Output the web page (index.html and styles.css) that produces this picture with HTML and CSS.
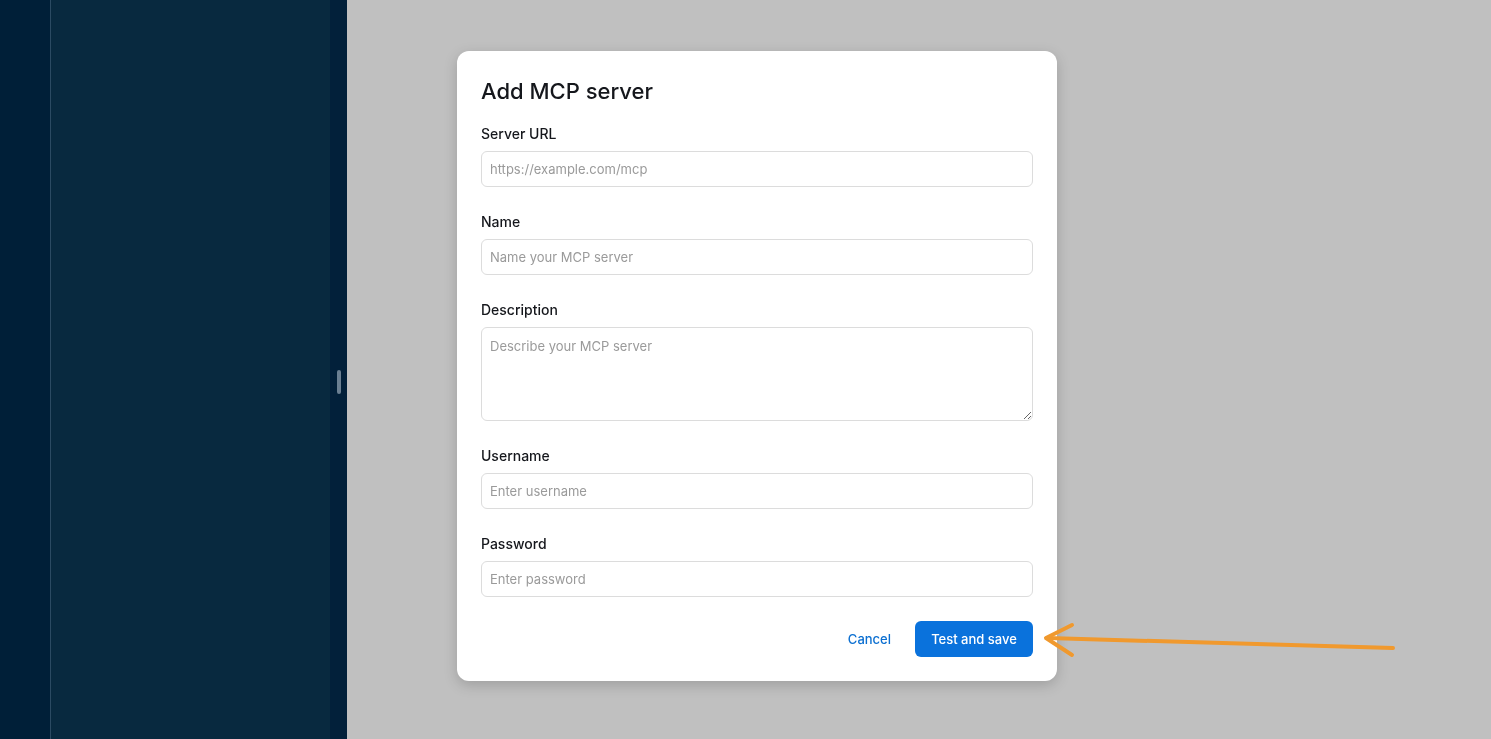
FILE: index.html
```html
<!DOCTYPE html>
<html lang="en">
<head>
<meta charset="utf-8">
<title>Add MCP server</title>
<link rel="stylesheet" href="styles.css">
</head>
<body>
<div class="app">
  <div class="rail"></div>
  <div class="sidebar"></div>
  <div class="gutter"><span class="handle"></span></div>
  <main class="main"></main>
</div>

<div class="overlay">
  <form class="modal">
    <h2 class="title">Add MCP server</h2>
    <label class="field">
      <span class="label">Server URL</span>
      <input class="input" type="text" placeholder="https://example.com/mcp">
    </label>
    <label class="field">
      <span class="label">Name</span>
      <input class="input" type="text" placeholder="Name your MCP server">
    </label>
    <label class="field">
      <span class="label">Description</span>
      <textarea class="input textarea" placeholder="Describe your MCP server"></textarea>
    </label>
    <label class="field">
      <span class="label">Username</span>
      <input class="input" type="text" placeholder="Enter username">
    </label>
    <label class="field">
      <span class="label">Password</span>
      <input class="input" type="password" placeholder="Enter password">
    </label>
    <div class="actions">
      <button type="button" class="btn btn-ghost">Cancel</button>
      <button type="button" class="btn btn-primary">Test and save</button>
    </div>
  </form>
</div>

<svg class="arrow" width="1491" height="739" viewBox="0 0 1491 739">
  <g fill="none" stroke="#f0992e" stroke-width="4" stroke-linecap="round" stroke-linejoin="round">
    <path d="M1393 648 L1048 638"/>
    <path d="M1072 625 L1046 638 L1072 655"/>
  </g>
</svg>
</body>
</html>
```

FILE: styles.css
```css
* { box-sizing: border-box; }

html, body {
  margin: 0;
  height: 100%;
  font-family: Inter, "Noto Sans", sans-serif;
}

.app {
  display: flex;
  height: 100vh;
}

.rail {
  background: #001f38;
  border-right: 1px solid #2b4a62;
  flex: 0 0 51px;
}

.sidebar {
  flex: 0 0 279px;
  background: #08293f;
}

.gutter {
  flex: 0 0 17px;
  background: #02203a;
  display: flex;
  align-items: center;
  padding-left: 7px;
}

.handle {
  width: 4px;
  height: 24px;
  border-radius: 2px;
  background: #6b7f92;
  margin-top: 24px;
}

.main {
  flex: 1;
  background: #c0c0c0;
}

.overlay {
  position: fixed;
  inset: 0;
  display: flex;
  align-items: center;
  justify-content: center;
  padding: 0 0 7px 23px;
}

.modal {
  width: 600px;
  background: #fff;
  border-radius: 12px;
  padding: 24px;
  box-shadow: 0 4px 14px rgba(0, 0, 0, 0.18);
  display: flex;
  flex-direction: column;
}

.title {
  margin: 0 0 16px;
  font-size: 22px;
  line-height: 32px;
  font-weight: 500;
  color: #15171c;
}

.field {
  display: flex;
  flex-direction: column;
  gap: 8px;
  margin-bottom: 24px;
}

.label {
  font-size: 14px;
  line-height: 20px;
  padding-top: 1px;
  margin-bottom: -1px;
  font-weight: 500;
  color: #15171c;
}

.input {
  height: 36px;
  border: 1px solid #dcdcdc;
  border-radius: 6px;
  padding: 0 8px;
  font-family: inherit;
  font-size: 13px;
  color: #15171c;
  background: #fff;
  outline: none;
}

.input::placeholder {
  color: #9a9a9a;
}

.textarea {
  height: 94px;
  padding: 9px 8px;
  line-height: 18px;
  resize: vertical;
}

.actions {
  display: flex;
  justify-content: flex-end;
  gap: 8px;
}

.btn {
  height: 36px;
  padding: 0 16px;
  border: 0;
  border-radius: 6px;
  font-family: inherit;
  font-size: 13px;
  font-weight: 500;
  cursor: pointer;
}

.btn-ghost {
  background: transparent;
  color: #0b6fd1;
}

.btn-primary {
  width: 118px;
  background: #0a72dc;
  color: #fff;
}

.arrow {
  position: fixed;
  left: 0;
  top: 0;
  pointer-events: none;
}
```
